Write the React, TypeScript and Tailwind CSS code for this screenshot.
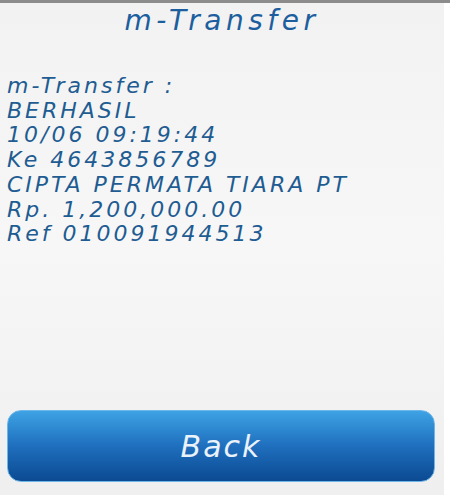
export default function App() {
  const lines = [
    'm-Transfer :',
    'BERHASIL',
    '10/06 09:19:44',
    'Ke 4643856789',
    'CIPTA PERMATA TIARA PT',
    'Rp. 1,200,000.00',
    'Ref 010091944513',
  ];

  return (
    <div className="w-[450px] h-[500px] bg-white flex flex-col font-['DejaVu_Sans',sans-serif]">
      {/* top rule */}
      <div className="h-[3px] bg-[#8c8c8c]" />

      <div className="w-[444px] h-[492px] bg-gradient-to-b from-[#f2f2f2] via-[#f7f7f7] to-[#efefef] flex flex-col">
        {/* Title */}
        <h1 className="text-center text-[28px] leading-[34px] italic text-[#1d5f9e] mt-[1px] tracking-[4.5px]">
          m-Transfer
        </h1>

        {/* Details */}
        <div className="mt-[36px] pl-[7px] flex flex-col text-[22px] leading-[24.7px] italic tracking-[3px] text-[#1e5c92]">
          {lines.map((line) => (
            <span key={line}>{line}</span>
          ))}
        </div>

        {/* Back button */}
        <div className="mt-auto mb-[13px] pl-[7px] pr-[9px]">
          <button className="w-full h-[72px] rounded-[14px] bg-gradient-to-b from-[#3ea3e4] via-[#1f6fbe] to-[#0b4a92] border border-[#6fb6e8] text-[#eaf2fa] text-[30px] italic tracking-[2px]">
            Back
          </button>
        </div>
      </div>
    </div>
  );
}
